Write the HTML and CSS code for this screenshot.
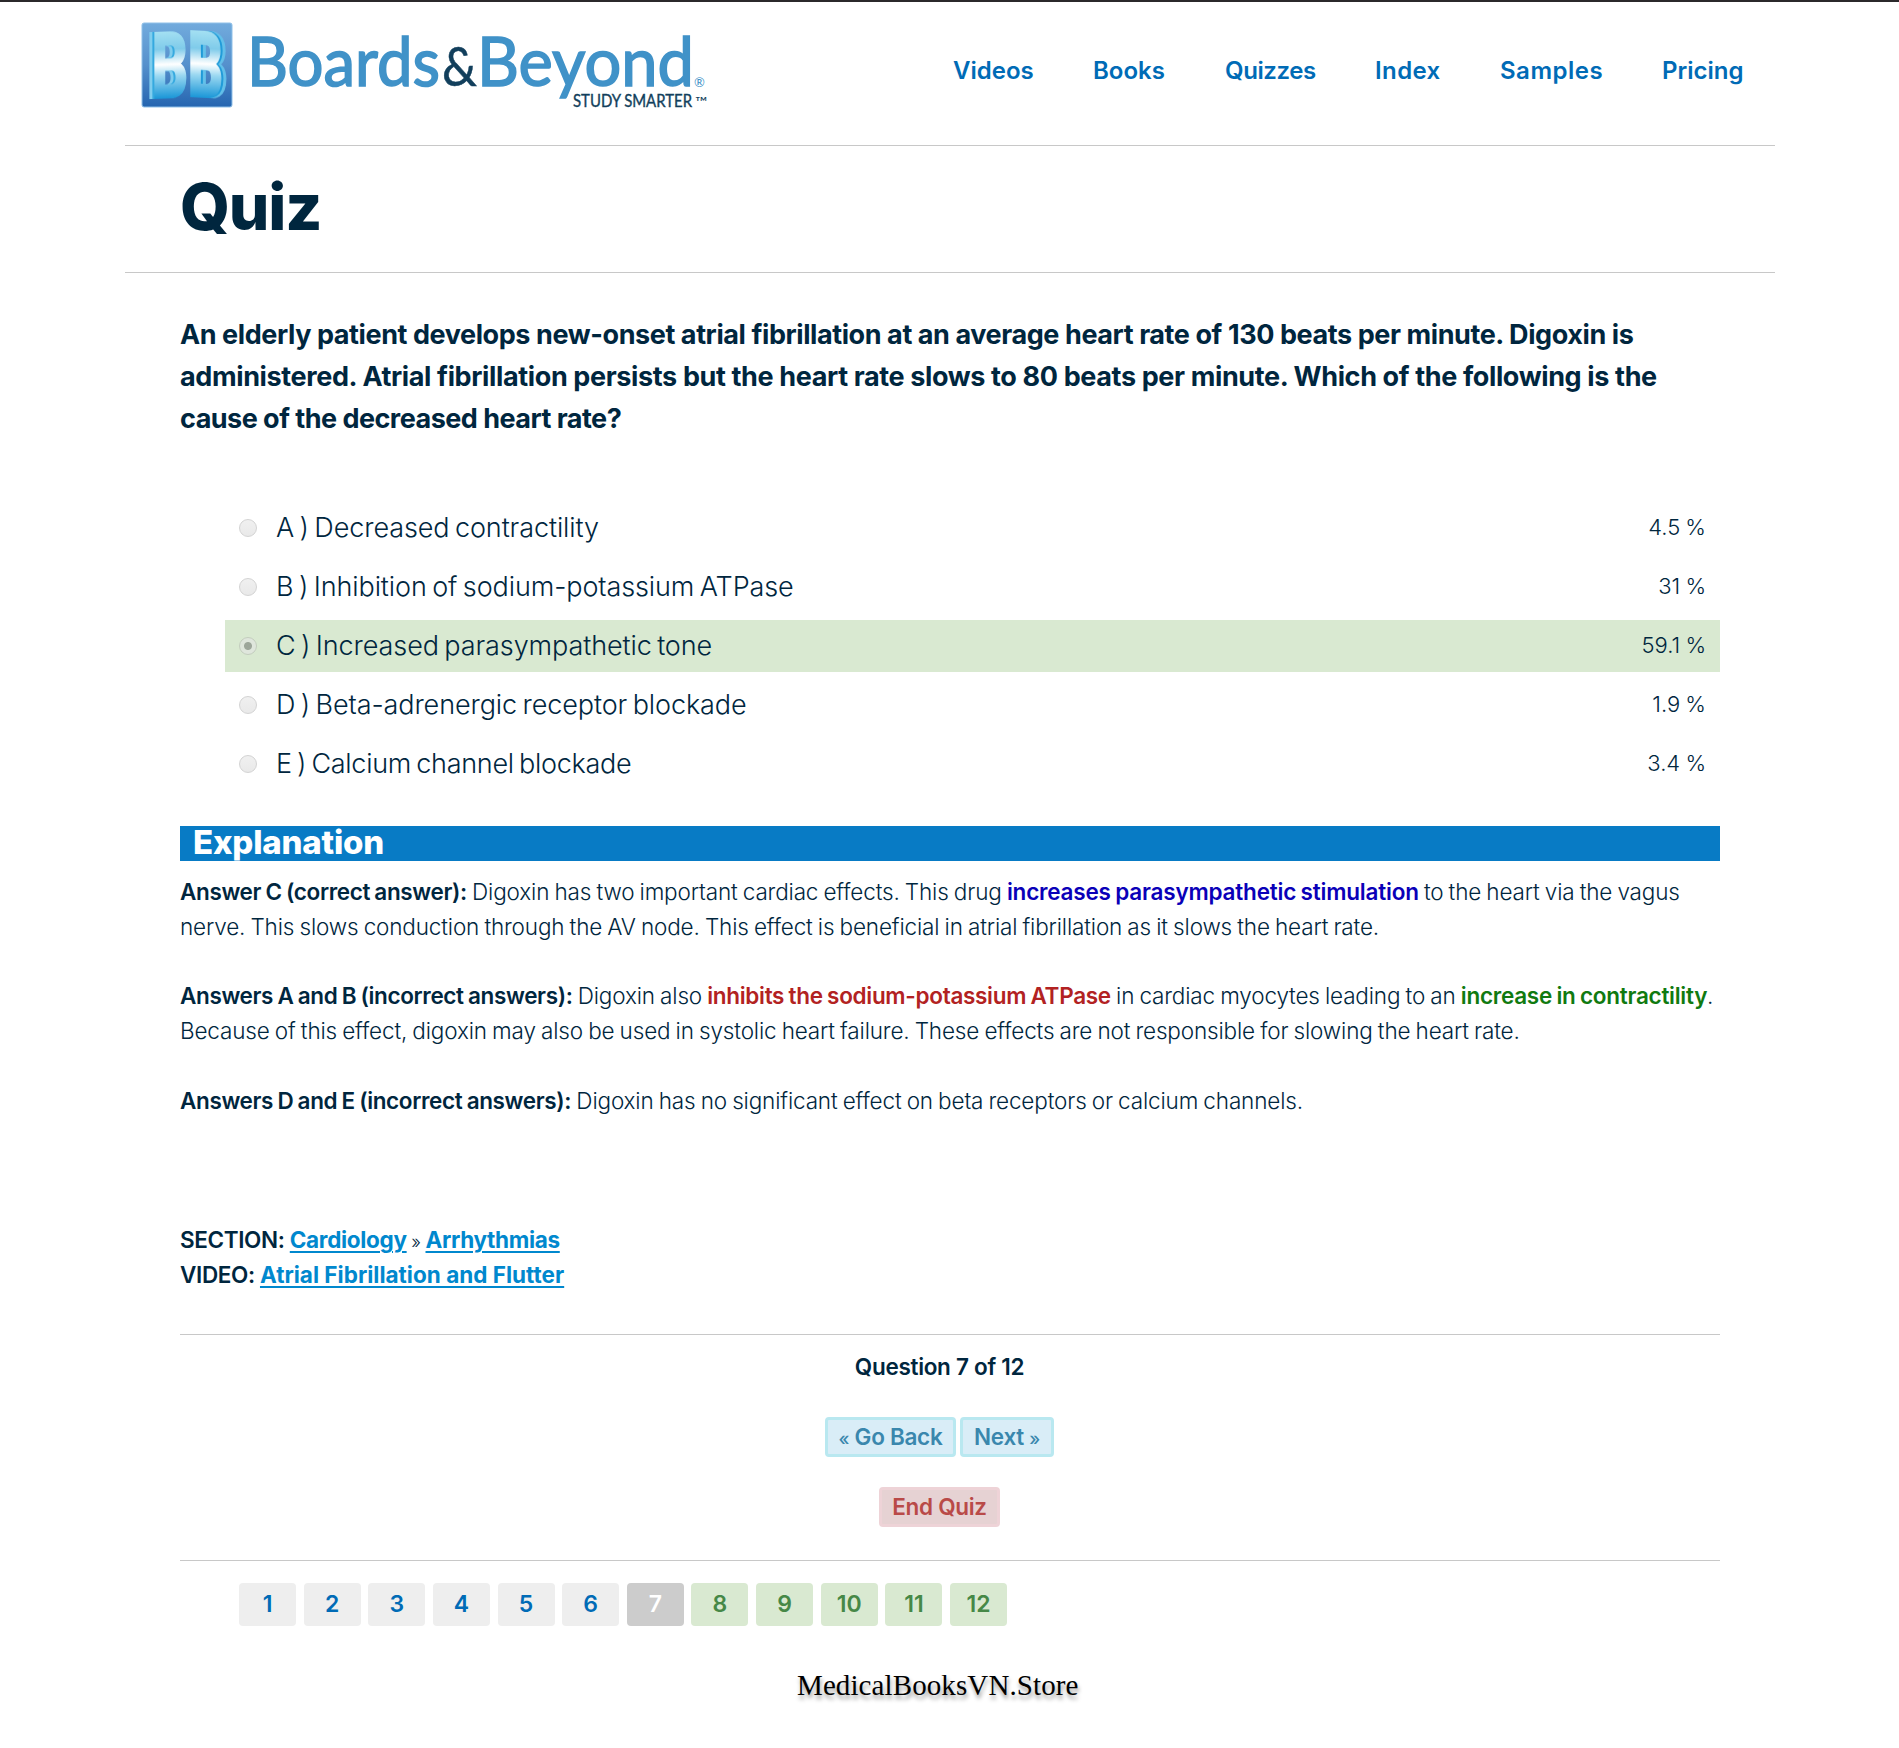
FILE: index.html
```html
<!DOCTYPE html>
<html lang="en">
<head>
<meta charset="utf-8">
<title>Quiz</title>
<link rel="stylesheet" href="styles.css">
</head>
<body>
<div class="page">
  <header class="header">
    <svg class="logo" width="570" height="92" viewBox="0 0 570 92" role="img" aria-label="Boards and Beyond">
      <defs>
        <linearGradient id="tile" x1="0" y1="0" x2="0" y2="1"><stop offset="0" stop-color="#72abdd"/><stop offset=".5" stop-color="#5590cc"/><stop offset="1" stop-color="#2565b0"/></linearGradient>
        <linearGradient id="face" gradientUnits="userSpaceOnUse" x1="0" y1="-68" x2="0" y2="2"><stop offset="0" stop-color="#a8e2f3"/><stop offset=".28" stop-color="#7fcbea"/><stop offset=".5" stop-color="#fff"/><stop offset=".66" stop-color="#9bd8f1"/><stop offset="1" stop-color="#1493d6"/></linearGradient>
      </defs>
      <rect x="1" y="1" width="90" height="84" rx="2" fill="url(#tile)" stroke="#8fc0e8"/>
      <g class="mono">
        <text class="left" transform="translate(11 76) skewY(-2)" textLength="36" lengthAdjust="spacingAndGlyphs">B</text>
        <text class="right" transform="translate(47 74) skewY(3)" textLength="35" lengthAdjust="spacingAndGlyphs">B</text>
      </g>
      <g class="word">
        <text x="106" y="63.500" textLength="193" lengthAdjust="spacingAndGlyphs">Boards</text>
        <text class="amp" x="301" y="63.500" textLength="35" lengthAdjust="spacingAndGlyphs">&amp;</text>
        <text x="336" y="63.500" textLength="217" lengthAdjust="spacingAndGlyphs">Beyond</text>
      </g>
      <text class="reg" x="553" y="64.500">®</text>
      <g class="tag">
        <text x="432" y="85" textLength="119" lengthAdjust="spacingAndGlyphs">STUDY SMARTER</text>
        <text class="tm" x="554" y="85" textLength="12" lengthAdjust="spacingAndGlyphs">™</text>
      </g>
    </svg>
    <nav class="nav">
      <a class="n1">Videos</a><a class="n2">Books</a><a class="n3">Quizzes</a><a class="n4">Index</a><a class="n5">Samples</a><a class="n6">Pricing</a>
    </nav>
  </header>

  <div class="title"><h1>Quiz</h1></div>

  <main class="content">
    <p class="question"><span>An elderly patient develops new-onset atrial fibrillation at an average heart rate of 130 beats per minute. Digoxin is</span><span class="q2">administered. Atrial fibrillation persists but the heart rate slows to 80 beats per minute. Which of the following is the</span><span class="q3">cause of the decreased heart rate?</span></p>

    <ul class="options">
      <li><i class="radio"></i><span>A ) Decreased contractility</span><b>4.5 %</b></li>
      <li><i class="radio"></i><span>B ) Inhibition of sodium-potassium ATPase</span><b>31 %</b></li>
      <li class="correct"><i class="radio on"></i><span>C ) Increased parasympathetic tone</span><b>59.1 %</b></li>
      <li><i class="radio"></i><span>D ) Beta-adrenergic receptor blockade</span><b>1.9 %</b></li>
      <li><i class="radio"></i><span>E ) Calcium channel blockade</span><b>3.4 %</b></li>
    </ul>

    <h2 class="bar">Explanation</h2>
    <div class="text">
      <p><strong>Answer C (correct answer):</strong> Digoxin has two important cardiac effects. This drug <strong class="blue">increases parasympathetic stimulation</strong> to the heart via the vagus<br>nerve. This slows conduction through the AV node. This effect is beneficial in atrial fibrillation as it slows the heart rate.</p>
      <p><strong>Answers A and B (incorrect answers):</strong> Digoxin also <strong class="red">inhibits the sodium-potassium ATPase</strong> in cardiac myocytes leading to an <strong class="green">increase in contractility</strong>.<br>Because of this effect, digoxin may also be used in systolic heart failure. These effects are not responsible for slowing the heart rate.</p>
      <p><strong>Answers D and E (incorrect answers):</strong> Digoxin has no significant effect on beta receptors or calcium channels.</p>
      <p class="meta"><strong>SECTION:</strong> <a>Cardiology</a> <small>»</small> <a>Arrhythmias</a><br><strong>VIDEO:</strong> <a class="video">Atrial Fibrillation and Flutter</a></p>
    </div>

    <section class="controls">
      <div class="count">Question 7 of 12</div>
      <div class="buttons"><a class="btn back"><small>«</small> Go Back</a><a class="btn next">Next <small>»</small></a></div>
      <a class="btn end">End Quiz</a>
    </section>

    <div class="pager">
      <a>1</a><a>2</a><a>3</a><a>4</a><a>5</a><a>6</a><a class="current">7</a><a class="done">8</a><a class="done">9</a><a class="done">10</a><a class="done">11</a><a class="done">12</a>
    </div>
  </main>
  <footer class="footer">MedicalBooksVN.Store</footer>
</div>
</body>
</html>
```
FILE: styles.css
```css
* { box-sizing: border-box; }
body {
  margin: 0;
  background: #fff;
  color: #00263e;
  font-family: Inter, "Liberation Sans", sans-serif;
  font-weight: 300;
}
h1, h2, p, ul { margin: 0; padding: 0; }
.page { height: 1748px; border-top: 2px solid #2b292b; overflow: hidden; }

.header {
  width: 1650px;
  height: 144px;
  margin-left: 125px;
  border-bottom: 1px solid #c8c8c8;
  display: flex;
  justify-content: space-between;
  align-items: flex-start;
}
.logo { margin: 20px 0 0 16px; overflow: visible; }
.mono { font: 900 90px Roboto, sans-serif; fill: url(#face); stroke: url(#face); stroke-width: 2px; }
.mono .left { filter: drop-shadow(-2px 0 0 #35a9df) drop-shadow(-3px 0 0 #7fcdee); }
.mono .right { filter: drop-shadow(2px 0 0 #1f9ad8) drop-shadow(3px 0 0 #63c0e9); }
.word { font: 400 68px Lato, sans-serif; fill: #4092c8; stroke: #4092c8; stroke-width: 1.6px; }
.word .amp { fill: #123f5c; stroke: #123f5c; stroke-width: .5px; font-size: 54px; }
.reg { font: 400 13px Lato, sans-serif; fill: #4092c8; }
.tag { font: 400 18px Lato, sans-serif; fill: #123f5c; stroke: #123f5c; stroke-width: .4px; }
.tag .tm { font-size: 14px; stroke: none; }

.nav { display: flex; padding: 54px 0 0; margin-right: 30px; }
.nav a {
  color: #006bb6;
  font-size: 24px;
  font-weight: 600;
  line-height: 30px;
  white-space: nowrap;
}
.n1 { width: 140px; }
.n2 { width: 132px; }
.n3 { width: 150px; letter-spacing: -.4px; }
.n4 { width: 125px; letter-spacing: .4px; }
.n5 { width: 162px; letter-spacing: .5px; }
.n6 { width: 83px; }

.title {
  width: 1650px;
  height: 127px;
  margin-left: 125px;
  padding: 21px 0 0 55px;
  border-bottom: 1px solid #c8c8c8;
}
h1 { font-size: 64px; line-height: 80px; font-weight: 800; letter-spacing: -1.2px; }

.content { width: 1540px; margin-left: 180px; padding-top: 40.500px; }
.question {
  font-size: 27px;
  line-height: 42.200px;
  font-weight: 650;
  letter-spacing: -.415px;
}
.question span { display: block; white-space: nowrap; }
.question .q2 { letter-spacing: -.37px; }
.question .q3 { letter-spacing: -.52px; }

.options {
  list-style: none;
  margin: 61.400px 0 36px 45px;
  display: flex;
  flex-direction: column;
  gap: 7px;
}
.options li {
  height: 52px;
  padding: 0 15px 1px 14px;
  display: flex;
  align-items: center;
  font-size: 27px;
  font-weight: 350;
  letter-spacing: -.1px;
  word-spacing: -2px;
}
.options li:last-child span { letter-spacing: -.3px; }
.options span { flex: 1; margin-left: 19px; }
.options b { font-size: 22px; font-weight: 300; letter-spacing: 0; word-spacing: -1px; margin-right: -1px; padding-bottom: 1px; }
.options .correct { background: #d9e9d1; }
.radio {
  width: 18px;
  height: 18px;
  margin-top: 2px;
  border: 1px solid #d3d3d3;
  border-radius: 50%;
  background: linear-gradient(#f0f0f0, #e9e9e9);
}
.radio.on {
  border-color: #c3cdbe;
  background: radial-gradient(circle, #9da69a 0 3.500px, #dfe6dc 4.500px);
}

.bar {
  height: 35px;
  padding-left: 13px;
  background: #087bc5;
  color: #fff;
  font-size: 33px;
  line-height: 32px;
  font-weight: 800;
  letter-spacing: -.2px;
}
.text {
  padding-top: 14.500px;
  font-size: 22.500px;
  line-height: 34.830px;
  letter-spacing: -.15px;
  word-spacing: -1px;
  white-space: nowrap;
}
.text p { margin-bottom: 34.830px; }
.text strong, .text a { font-weight: 600; letter-spacing: -.36px; }
.text .blue { color: #0a00b8; letter-spacing: -.2px; }
.text .red { color: #b22222; letter-spacing: -.3px; }
.text .green { color: #107a10; letter-spacing: -.26px; }
.text .meta { margin: 104.500px 0 41px; }
.text .meta a {
  color: #0088ce;
  font-weight: 700;
  letter-spacing: -.32px;
  text-decoration: underline;
  text-decoration-thickness: 2px;
  text-underline-offset: 3px;
}
.text .meta .video { letter-spacing: .01px; word-spacing: 0; }
.text small { font-size: 18px; line-height: 0; margin: 0 -.5px; }

.controls {
  height: 227px;
  border-top: 1px solid #c8c8c8;
  border-bottom: 1px solid #c8c8c8;
  padding: 14px 21px 0 0;
  display: flex;
  flex-direction: column;
  align-items: center;
  font-size: 22.500px;
  font-weight: 600;
  letter-spacing: -.3px;
}
.count { line-height: 35px; }
.buttons { display: flex; gap: 4px; margin: 33px 0 30px; }
.btn {
  height: 40px;
  border: 3px solid #b9e8f0;
  border-radius: 4px;
  background: #d9edf7;
  color: #3a87ad;
  line-height: 33px;
  text-align: center;
  white-space: nowrap;
}
.btn small { font-size: 18px; line-height: 0; font-weight: 500; }
.back { width: 131px; }
.next { width: 94px; }
.end { width: 121px; background: #e6d2d3; border-color: #eed3d7; color: #b94a48; }

.pager { display: flex; gap: 7.650px; padding: 22px 0 0 59px; }
.pager a {
  width: 57px;
  height: 43px;
  border-radius: 4px;
  background: #eee;
  color: #006bb6;
  font-size: 23px;
  font-weight: 600;
  line-height: 42px;
  text-align: center;
}
.pager .current { background: #ccc; color: #fff; }
.pager .done { background: #d9e9d1; color: #468847; }

.footer {
  margin: 41px 0 0 797px;
  color: #000;
  font: 400 29px/36px "Palatino Linotype", "Liberation Serif", serif;
  letter-spacing: .1px;
  text-shadow: 1px 4px 4px rgba(0, 0, 0, .4);
}
```
